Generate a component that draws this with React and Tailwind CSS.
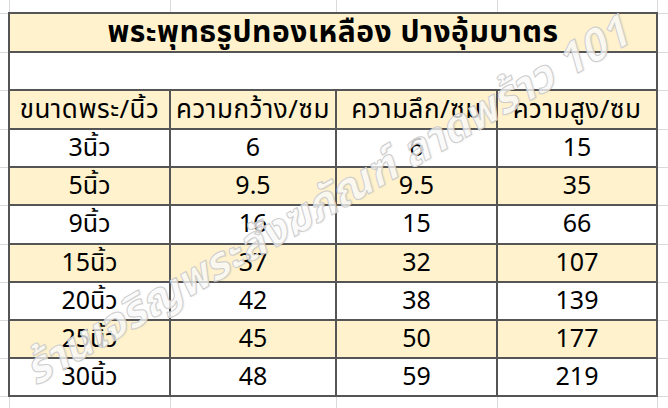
import React from "react";

const rows = [
  ["3นิ้ว", "6", "6", "15"],
  ["5นิ้ว", "9.5", "9.5", "35"],
  ["9นิ้ว", "16", "15", "66"],
  ["15นิ้ว", "37", "32", "107"],
  ["20นิ้ว", "42", "38", "139"],
  ["25นิ้ว", "45", "50", "177"],
  ["30นิ้ว", "48", "59", "219"],
];

const heights = ["h-[38px]", "h-[38px]", "h-[39px]", "h-[38px]", "h-[38px]", "h-[38px]", "h-[38px]"];

// faint spreadsheet gridline cell
const grid = "border border-[#dadada] p-0";
// table cell with the dark rule
const cell = "border-2 border-[#555555] p-0 text-center align-middle leading-none text-black";

export default function App() {
  return (
    <div className="relative w-[668px] h-[408px] overflow-hidden bg-white font-['Tahoma','Noto_Sans_Thai','DejaVu_Sans',sans-serif]">
      <table className="w-[668px] table-fixed border-collapse">
        <colgroup>
          <col className="w-[9px]" />
          <col className="w-[161px]" />
          <col className="w-[166px]" />
          <col className="w-[161px]" />
          <col className="w-[160px]" />
          <col className="w-[11px]" />
        </colgroup>
        <tbody>
          <tr className="h-[13px]">
            <td className={`${grid} border-t-0 border-l-0`} />
            <td className={`${grid} border-t-0`} />
            <td className={`${grid} border-t-0`} />
            <td className={`${grid} border-t-0`} />
            <td className={`${grid} border-t-0`} />
            <td className={`${grid} border-t-0 border-r-0`} />
          </tr>

          {/* title */}
          <tr className="h-[39px]">
            <td className={`${grid} border-l-0`} />
            <td colSpan={4} className={`${cell} bg-[#fff2cc] font-bold text-[30px] tracking-[0.5px]`}>
              พระพุทธรูปทองเหลือง ปางอุ้มบาตร
            </td>
            <td className={`${grid} border-r-0`} />
          </tr>

          {/* empty row */}
          <tr className="h-[38px]">
            <td className={`${grid} border-l-0`} />
            <td colSpan={4} className={`${cell} bg-white`} />
            <td className={`${grid} border-r-0`} />
          </tr>

          {/* header */}
          <tr className="h-[39px] text-[26px] tracking-[0.5px]">
            <td className={`${grid} border-l-0`} />
            <td className={`${cell} bg-[#fff2cc]`}>ขนาดพระ/นิ้ว</td>
            <td className={`${cell} bg-[#fff2cc]`}>ความกว้าง/ซม</td>
            <td className={`${cell} bg-[#fff2cc]`}>ความลึก/ซม</td>
            <td className={`${cell} bg-[#fff2cc]`}>ความสูง/ซม</td>
            <td className={`${grid} border-r-0`} />
          </tr>

          {rows.map((r, i) => (
            <tr key={r[0]} className={`${heights[i]} text-[25px]`}>
              <td className={`${grid} border-l-0`} />
              {r.map((v, j) => (
                <td key={j} className={`${cell} ${i % 2 === 1 ? "bg-[#fff2cc]" : "bg-white"}`}>
                  {v}
                </td>
              ))}
              <td className={`${grid} border-r-0`} />
            </tr>
          ))}

          <tr className="h-[12px]">
            <td className={`${grid} border-l-0 border-b-0`} />
            <td className={`${grid} border-b-0`} />
            <td className={`${grid} border-b-0`} />
            <td className={`${grid} border-b-0`} />
            <td className={`${grid} border-b-0`} />
            <td className={`${grid} border-r-0 border-b-0`} />
          </tr>
        </tbody>
      </table>

      {/* watermark */}
      <div className="pointer-events-none absolute left-[40px] top-[350px] origin-bottom-left -rotate-[30deg] whitespace-nowrap text-[44px] font-bold italic leading-none text-white/75 [-webkit-text-stroke:1px_#cdcdcd] [text-shadow:1px_1px_2px_rgba(0,0,0,0.08)]">
        ร้านเจริญพระสังฆภัณฑ์ ลาดพร้าว 101
      </div>
    </div>
  );
}
